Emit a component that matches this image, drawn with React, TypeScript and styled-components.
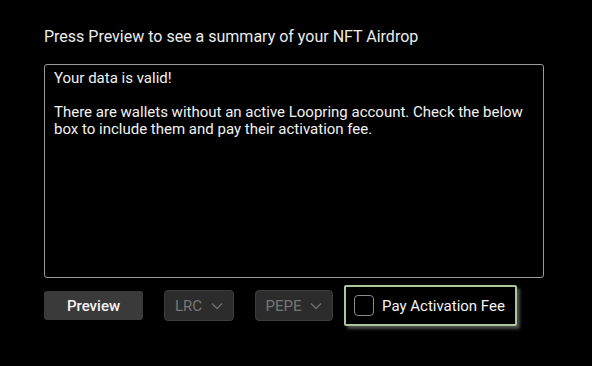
import styled, { createGlobalStyle } from 'styled-components'

const GlobalStyle = createGlobalStyle`
  html, body {
    margin: 0;
    padding: 0;
    background: #000;
  }
  body {
    font-family: Roboto, "Noto Sans", "Liberation Sans", sans-serif;
    color: #f0f0f0;
  }
`

const Page = styled.div`
  width: 592px;
  height: 366px;
  padding: 27px 0 0 44px;
  box-sizing: border-box;
  background: #000;
`

const Title = styled.p`
  margin: 0 0 18px;
  font-size: 16px;
  line-height: 19px;
  color: #ececec;
`

const SummaryBox = styled.div`
  width: 500px;
  height: 214px;
  box-sizing: border-box;
  border: 1px solid #9a9a9a;
  border-radius: 3px;
  padding: 5px 9px;
  font-size: 15px;
  line-height: 17px;
  color: #f2f2f2;

  p {
    margin: 0 0 17px;
  }
`

const Controls = styled.div`
  display: flex;
  align-items: center;
  margin-top: 7px;
`

const PreviewButton = styled.button`
  width: 99px;
  height: 29px;
  margin-right: 21px;
  border: none;
  border-radius: 3px;
  background: #3a3a3a;
  color: #f4f4f4;
  font-family: inherit;
  font-size: 15px;
  font-weight: 500;
  cursor: pointer;
`

const Select = styled.div<{ $width: number }>`
  width: ${({ $width }) => $width}px;
  height: 31px;
  margin-right: ${({ $width }) => ($width > 75 ? 11 : 21)}px;
  box-sizing: border-box;
  display: flex;
  align-items: center;
  justify-content: center;
  gap: 9px;
  border: 1px solid #3c3c3c;
  border-radius: 4px;
  background: #2c2c2c;
  color: #767676;
  font-size: 15px;
`

const Chevron = () => (
  <svg width="12" height="8" viewBox="0 0 12 8" fill="none">
    <path d="M1 1.5L6 6.5L11 1.5" stroke="#6e6e6e" strokeWidth="1.3" />
  </svg>
)

const FeeOption = styled.label`
  width: 173px;
  height: 41px;
  box-sizing: border-box;
  display: flex;
  align-items: center;
  gap: 8px;
  padding-left: 8px;
  border: 2px solid #a8c79b;
  border-radius: 2px;
  background: #000;
  box-shadow: 3px 3px 3px rgba(140, 140, 140, 0.55);
  font-size: 15px;
  color: #f4f4f4;
  cursor: pointer;
`

const Box = styled.span`
  width: 20px;
  height: 21px;
  box-sizing: border-box;
  border: 1px solid #8a8a8a;
  border-radius: 4px;
`

export default function App() {
  return (
    <>
      <GlobalStyle />
      <Page>
        <Title>Press Preview to see a summary of your NFT Airdrop</Title>
        <SummaryBox>
          <p>Your data is valid!</p>
          <p>
            There are wallets without an active Loopring account. Check the below box to include
            them and pay their activation fee.
          </p>
        </SummaryBox>
        <Controls>
          <PreviewButton>Preview</PreviewButton>
          <Select $width={70}>
            LRC <Chevron />
          </Select>
          <Select $width={78}>
            PEPE <Chevron />
          </Select>
          <FeeOption>
            <Box />
            Pay Activation Fee
          </FeeOption>
        </Controls>
      </Page>
    </>
  )
}
